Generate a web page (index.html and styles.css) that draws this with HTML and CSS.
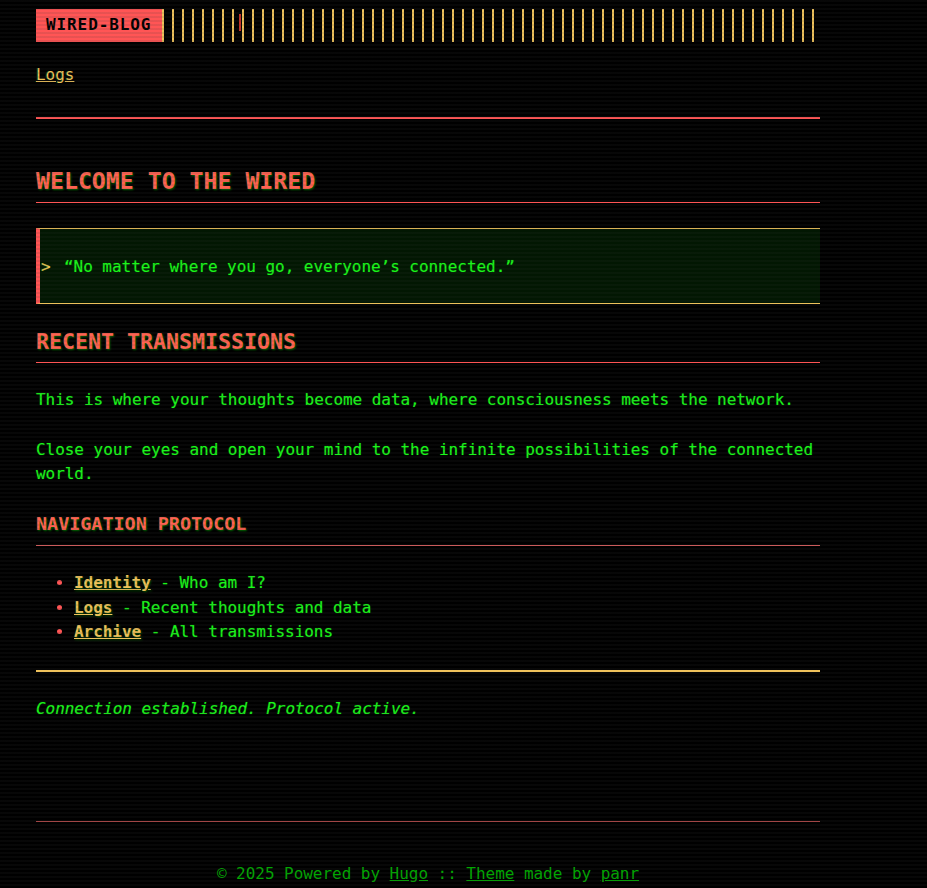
FILE: index.html
```html
<!DOCTYPE html>
<html lang="en">
<head>
<meta charset="utf-8">
<title>WIRED-BLOG</title>
<link rel="stylesheet" href="styles.css">
</head>
<body>
<div class="container">
  <header class="header">
    <div class="header-inner">
      <a class="logo" href="#">WIRED-BLOG</a>
      <div class="bars"><span class="cursor"></span></div>
    </div>
    <nav class="menu"><a href="#">Logs</a></nav>
  </header>
  <hr class="rule-red">
  <main class="content">
    <h1 class="title">WELCOME TO THE WIRED</h1>
    <blockquote class="quote"><span class="prompt">&gt;</span><span>“No matter where you go, everyone’s connected.”</span></blockquote>
    <h2 class="title2">RECENT TRANSMISSIONS</h2>
    <p class="p1">This is where your thoughts become data, where consciousness meets the network.</p>
    <p class="p2">Close your eyes and open your mind to the infinite possibilities of the connected world.</p>
    <h3 class="title3">NAVIGATION PROTOCOL</h3>
    <ul class="navlist">
      <li><a href="#">Identity</a> - Who am I?</li>
      <li><a href="#">Logs</a> - Recent thoughts and data</li>
      <li><a href="#">Archive</a> - All transmissions</li>
    </ul>
    <hr class="rule-yellow">
    <p class="status"><em>Connection established. Protocol active.</em></p>
  </main>
  <footer class="footer">
    <div class="copyright">© 2025 Powered by <a href="#">Hugo</a> :: <a href="#">Theme</a> made by <a href="#">panr</a></div>
  </footer>
</div>
</body>
</html>
```
FILE: styles.css
```css
html, body {
  margin: 0;
  padding: 0;
  background: #000;
}
body {
  font-family: "DejaVu Sans Mono", "Liberation Mono", monospace;
  font-size: 16px;
  line-height: 24px;
  letter-spacing: -0.04px;
  color: #1cf51c;
  min-height: 888px;
}
body::after {
  content: "";
  position: fixed;
  inset: 0;
  pointer-events: none;
  background: repeating-linear-gradient(to bottom, rgba(60, 60, 60, 0.12) 0, rgba(60, 60, 60, 0.12) 2px, transparent 2px, transparent 4px);
}
.container {
  width: 784px;
  padding: 9px 36px 0;
}
.header-inner {
  display: flex;
  height: 33px;
}
.logo {
  flex: 0 0 auto;
  box-sizing: border-box;
  width: 126px;
  background: #ff5555;
  color: #000;
  font-weight: bold;
  letter-spacing: 0.9px;
  white-space: nowrap;
  text-decoration: none;
  padding: 0 0 0 10px;
  line-height: 32px;
}
.bars {
  position: relative;
  width: 652px;
  background: repeating-linear-gradient(90deg, #eec15b 0, #eec15b 2px, transparent 2px, transparent 10px);
}
.cursor {
  position: absolute;
  left: 77px;
  top: 5px;
  width: 2px;
  height: 17px;
  background: #c8322a;
}
.menu {
  margin-top: 21px;
  line-height: 24px;
}
.menu a {
  color: #eec15b;
  text-decoration: underline;
  text-shadow: -1px 0 0 rgba(0, 160, 60, 0.35);
}
.rule-red {
  border: 0;
  height: 2px;
  background: #ff5555;
  margin: 30px 0 0;
}
.title, .title2, .title3 {
  color: #ff6252;
  font-weight: bold;
  margin: 0;
  letter-spacing: 0;
  text-shadow: 1px 1px 2px rgba(0, 140, 0, 0.75);
}
.title {
  font-size: 23.2px;
  line-height: 30px;
  margin-top: 47px;
  padding-bottom: 6px;
  border-bottom: 1px solid #ff5555;
}
.quote {
  margin: 25px 0 0;
  background: #021702;
  border-left: 4px solid #ff5555;
  border-top: 1px solid #eec15b;
  border-bottom: 1px solid #eec15b;
  padding: 26px 0 24px;
  display: flex;
  line-height: 24px;
  text-shadow: 0 0 1px rgba(0, 255, 0, 0.5);
}
.prompt {
  color: #eec15b;
  padding-left: 1px;
  width: 23px;
}
.title2 {
  font-size: 21.6px;
  line-height: 28px;
  margin-top: 24px;
  padding-bottom: 6px;
  border-bottom: 1px solid #ff5555;
}
.p1, .p2, .navlist, .status {
  text-shadow: 0 0 1px rgba(0, 255, 0, 0.5);
}
.p1 {
  margin: 25px 0 0;
}
.p2 {
  margin: 26px 0 0;
}
.title3 {
  font-size: 18.4px;
  line-height: 24px;
  margin-top: 26px;
  padding-bottom: 9px;
  border-bottom: 1px solid #e06060;
}
.navlist {
  margin: 25px 0 0;
  padding-left: 38px;
  line-height: 24.5px;
}
.navlist li::marker {
  color: #ff5555;
}
.navlist a {
  color: #eec15b;
  font-weight: bold;
  text-decoration: underline;
  text-shadow: 1px 1px 2px rgba(0, 140, 0, 0.6);
}
.rule-yellow {
  border: 0;
  height: 2px;
  background: #eec15b;
  margin: 25px 0 0;
}
.status {
  margin: 25px 0 0;
}
.footer {
  margin-top: 100px;
  border-top: 1px solid #b04848;
  padding-top: 40px;
}
.copyright {
  text-align: center;
  color: #00a800;
}
.copyright a {
  color: #00a800;
  text-decoration: underline;
}
```
